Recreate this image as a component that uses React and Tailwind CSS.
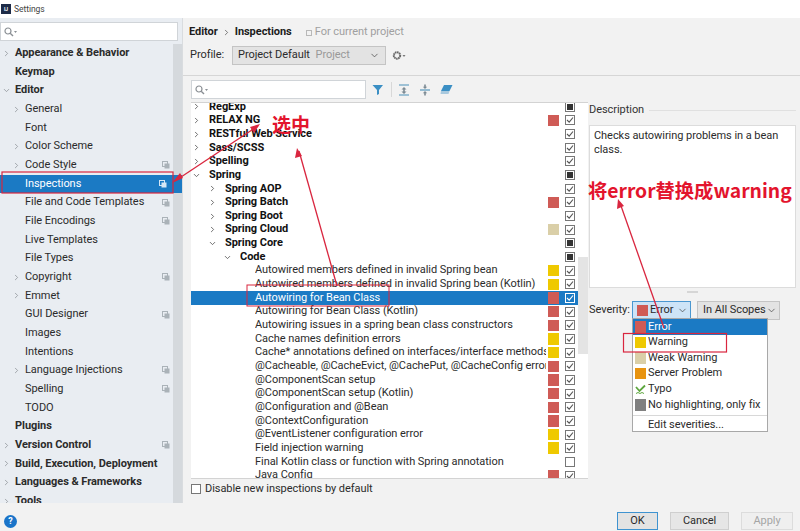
import React from 'react';
import { ChevronRight, ChevronDown } from 'lucide-react';

const FONT = '[font-family:Roboto,"Noto_Sans_CJK_SC",sans-serif]';

const sideItems = [
  ['Appearance & Behavior', 0, 'r', false],
  ['Keymap', 0, '', false],
  ['Editor', 0, 'd', false],
  ['General', 1, 'r', false],
  ['Font', 1, '', false],
  ['Color Scheme', 1, 'r', false],
  ['Code Style', 1, 'r', true],
  ['Inspections', 1, '', true, true],
  ['File and Code Templates', 1, '', true],
  ['File Encodings', 1, '', true],
  ['Live Templates', 1, '', false],
  ['File Types', 1, '', false],
  ['Copyright', 1, 'r', true],
  ['Emmet', 1, 'r', false],
  ['GUI Designer', 1, '', true],
  ['Images', 1, '', false],
  ['Intentions', 1, '', false],
  ['Language Injections', 1, 'r', true],
  ['Spelling', 1, '', true],
  ['TODO', 1, '', false],
  ['Plugins', 0, '', false],
  ['Version Control', 0, 'r', true],
  ['Build, Execution, Deployment', 0, 'r', false],
  ['Languages & Frameworks', 0, 'r', false],
  ['Tools', 0, 'r', false],
];

const E = 'bg-[#cf5b56]';
const W = 'bg-[#efc900]';
const L = 'bg-[#dacfa8]';

// label, level, arrow, swatch, check state, bold, selected
const tree = [
  ['RegExp', 0, 'r', '', 'i', true],
  ['RELAX NG', 0, 'r', E, 'c', true],
  ['RESTful Web Service', 0, 'r', '', 'c', true],
  ['Sass/SCSS', 0, 'r', '', 'c', true],
  ['Spelling', 0, 'r', '', 'c', true],
  ['Spring', 0, 'd', '', 'i', true],
  ['Spring AOP', 1, 'r', '', 'c', true],
  ['Spring Batch', 1, 'r', E, 'c', true],
  ['Spring Boot', 1, 'r', '', 'c', true],
  ['Spring Cloud', 1, 'r', L, 'c', true],
  ['Spring Core', 1, 'd', '', 'i', true],
  ['Code', 2, 'd', '', 'i', true],
  ['Autowired members defined in invalid Spring bean', 3, '', W, 'c'],
  ['Autowired members defined in invalid Spring bean (Kotlin)', 3, '', W, 'c'],
  ['Autowiring for Bean Class', 3, '', E, 'c', false, true],
  ['Autowiring for Bean Class (Kotlin)', 3, '', E, 'c'],
  ['Autowiring issues in a spring bean class constructors', 3, '', E, 'c'],
  ['Cache names definition errors', 3, '', W, 'c'],
  ['Cache* annotations defined on interfaces/interface methods', 3, '', W, 'c'],
  ['@Cacheable, @CacheEvict, @CachePut, @CacheConfig errors', 3, '', E, 'c'],
  ['@ComponentScan setup', 3, '', E, 'c'],
  ['@ComponentScan setup (Kotlin)', 3, '', E, 'c'],
  ['@Configuration and @Bean', 3, '', E, 'c'],
  ['@ContextConfiguration', 3, '', E, 'c'],
  ['@EventListener configuration error', 3, '', W, 'c'],
  ['Field injection warning', 3, '', W, 'c'],
  ['Final Kotlin class or function with Spring annotation', 3, '', '', 'n'],
  ['Java Config', 3, '', E, 'c'],
];

const treeIndent = ['w-[18px]', 'w-[34px]', 'w-[49px]', 'w-[64px]'];

function CopyIcon({ light }) {
  const c = light ? '#d5e6f5' : '#aab2b8';
  return (
    <svg width="8" height="8" viewBox="0 0 8 8" className="shrink-0">
      <rect x="0.5" y="0.5" width="5" height="5" fill="none" stroke={c} />
      <rect x="2.5" y="2.5" width="5" height="5" fill={c} />
    </svg>
  );
}

function Check({ state, selected }) {
  const border = selected ? 'border-white' : 'border-[#777]';
  return (
    <span className={`w-[10px] h-[10px] border ${border} flex items-center justify-center shrink-0`}>
      {state === 'c' && (
        <svg width="8" height="8" viewBox="0 0 8 8">
          <path d="M1 4 L3.2 6.2 L7 1.5" fill="none" stroke={selected ? '#fff' : '#555'} strokeWidth="1.1" />
        </svg>
      )}
      {state === 'i' && <span className="w-[6px] h-[6px] bg-[#333]" />}
    </span>
  );
}

function SearchBox({ className }) {
  return (
    <div className={`bg-white border border-[#d0d4d8] flex items-center pl-[3px] ${className}`}>
      <svg width="14" height="10" viewBox="0 0 14 10">
        <circle cx="4" cy="4" r="3" fill="none" stroke="#8a8f94" strokeWidth="1.2" />
        <path d="M6.2 6.2 L9 9" stroke="#8a8f94" strokeWidth="1.4" />
        <path d="M10 4 L13 4 L11.5 6 Z" fill="#8a8f94" />
      </svg>
    </div>
  );
}

function Sidebar() {
  return (
    <div className="w-[183px] bg-[#e9edf2] flex flex-col shrink-0 border-r border-[#d9dcdf]">
      <div className="h-[26px] pt-[4px] shrink-0">
        <SearchBox className="w-[178px] h-[19px]" />
      </div>
      <div className="flex flex-1 min-h-0 overflow-hidden">
        <div className="flex-1 min-w-0">
          {sideItems.map(([label, lvl, arrow, copy, sel]) => (
            <div
              key={label}
              className={`h-[18.67px] flex items-center pr-[3px] text-[11px] whitespace-nowrap ${
                sel ? 'bg-[#1b7ac4] text-white w-[182px] relative z-0' : 'text-[#2b2b2b]'
              } ${lvl === 0 ? 'font-bold text-[#1c1c1c]' : ''}`}
            >
              <span className={`${lvl === 0 ? 'w-[15px]' : 'w-[25px]'} shrink-0 flex justify-end pr-[1px]`}>
                {arrow === 'r' && <ChevronRight size={9} strokeWidth={2} color="#8a8f94" className="mr-[3px]" />}
                {arrow === 'd' && <ChevronDown size={9} strokeWidth={2} color="#8a8f94" className="mr-[3px]" />}
              </span>
              <span className="flex-1">{label}</span>
              {copy && <span className={sel ? 'mr-[12px]' : ''}><CopyIcon light={sel} /></span>}
            </div>
          ))}
        </div>
        <div className="w-[9px] bg-[#d5d9dd] shrink-0" />
      </div>
    </div>
  );
}

function Toolbar() {
  return (
    <div className="flex items-center h-[19px] shrink-0">
      <SearchBox className="w-[175px] h-[19px]" />
      <svg width="12" height="12" viewBox="0 0 12 12" className="ml-[6px]">
        <path d="M0.5 1 H11 L7 6 V10 L5 11 V6 Z" fill="#3b8fc4" />
      </svg>
      <span className="w-px h-[15px] bg-[#d8d8d8] ml-[7px]" />
      <svg width="12" height="12" viewBox="0 0 12 12" className="ml-[6px]">
        <path d="M1 1 H11 M1 11 H11" stroke="#4a90b8" strokeWidth="1.1" />
        <path d="M6 3 L3.5 5.5 H5.2 V7.5 H3.5 L6 10 L8.5 7.5 H6.8 V5.5 H8.5 Z" fill="#7c8a93" />
      </svg>
      <svg width="12" height="12" viewBox="0 0 12 12" className="ml-[9px]">
        <path d="M1 6 H11" stroke="#4a90b8" strokeWidth="1.1" />
        <path d="M6 5 L3.8 2.8 H5.2 V0.5 H6.8 V2.8 H8.2 Z M6 7 L3.8 9.2 H5.2 V11.5 H6.8 V9.2 H8.2 Z" fill="#7c8a93" />
      </svg>
      <svg width="13" height="11" viewBox="0 0 13 11" className="ml-[9px]">
        <path d="M4 1 H12.5 L9.5 7 H1 Z" fill="#3b8fc4" />
        <path d="M1 7 H9.5 L8.5 10 H0.5 Z" fill="#a9c9de" />
      </svg>
    </div>
  );
}

function Tree() {
  return (
    <div className="h-[377px] mt-[3px] bg-white border-y border-[#d3d3d3] overflow-hidden flex">
      <div className="flex-1 min-w-0 -mt-[3px]">
        {tree.map(([label, lvl, arrow, swatch, state, bold, sel]) => (
          <div
            key={label}
            className={`h-[13.67px] flex items-center whitespace-nowrap text-[11px] ${sel ? 'bg-[#1b7ac4] text-white' : 'text-[#2b2b2b]'} ${bold ? 'font-bold text-[#111]' : ''}`}
          >
            <span className={`${treeIndent[lvl]} shrink-0 flex justify-end`}>
              {arrow === 'r' && <ChevronRight size={9} strokeWidth={2.2} color="#555" className="mr-[8px]" />}
              {arrow === 'd' && <ChevronDown size={9} strokeWidth={2.2} color="#555" className="mr-[8px]" />}
            </span>
            <span className="flex-1 min-w-0 overflow-hidden">{label}</span>
            <span className={`w-[11.5px] h-[11.5px] ml-[2px] shrink-0 ${swatch}`} />
            <span className="w-[6px] shrink-0" />
            <Check state={state} selected={sel} />
            <span className="w-[3px] shrink-0" />
          </div>
        ))}
      </div>
      <div className="w-[10px] shrink-0 flex flex-col bg-white">
        <span className="h-[154px]" />
        <span className="h-[97px] bg-[#e4e4e4]" />
      </div>
    </div>
  );
}

function Combo({ children, className }) {
  return (
    <div className={`h-[19px] border border-[#c4c4c4] bg-[#e3e3e3] flex items-center justify-between pl-[5px] pr-[2px] text-[11px] text-[#2b2b2b] whitespace-nowrap ${className}`}>
      {children}
      <ChevronDown size={11} strokeWidth={1.6} color="#444" className="shrink-0" />
    </div>
  );
}

function Right() {
  return (
    <div className="w-[207px] ml-[1px] mt-[20px] shrink-0 flex flex-col">
      <div className="flex items-center h-[20px] text-[11px] text-[#333] gap-[5px] shrink-0">
        Description
        <span className="flex-1 h-px bg-[#e0e0e0]" />
      </div>
      <div className="mt-[5px] h-[163px] bg-white border border-[#dcdcdc] px-[4px] py-[3px] text-[11px] leading-[13.5px] text-[#2b2b2b]">
        Checks autowiring problems in a bean class.
      </div>
      <div className="flex justify-center h-[6px] items-center shrink-0 mt-[1px]">
        <span className="w-[11px] h-[2px] bg-[#d6d6d6]" />
      </div>
      <div className="flex items-center mt-[6px] text-[11px] text-[#2b2b2b]">
        <span className="w-[43px]">Severity:</span>
        <Combo className="w-[59px] !bg-[#cde4f7] !border-[#4a97d0] !pl-[4px]">
          <span className="flex items-center gap-[2px]">
            <span className={`w-[11px] h-[11px] ${E}`} />
            Error
          </span>
        </Combo>
        <Combo className="w-[83px] ml-[6px] !pr-[3px]">In All Scopes</Combo>
      </div>
    </div>
  );
}

function Popup() {
  const items = [
    ['Error', E, true],
    ['Warning', W],
    ['Weak Warning', L],
    ['Server Problem', 'bg-[#e8930f]'],
    ['Typo', 'typo'],
    ['No highlighting, only fix', 'bg-[#808080]'],
  ];
  return (
    <div className="absolute left-[632px] top-[318px] w-[136px] h-[114px] bg-white border border-[#a8a8a8] text-[11px] text-[#2b2b2b] z-10">
      {items.map(([t, c, sel]) => (
        <div key={t} className={`h-[15.6px] flex items-center gap-[2px] pl-[2px] whitespace-nowrap ${sel ? 'bg-[#1b7ac4] text-white' : ''}`}>
          {c === 'typo' ? (
            <svg width="11" height="11" viewBox="0 0 11 11" className="shrink-0">
              <path d="M1 3 L4.5 7 L10 1.5" fill="none" stroke="#5da63d" strokeWidth="1.8" />
              <path d="M1 9.5 L3 8.5 L5 9.5 L7 8.5 L9 9.5" fill="none" stroke="#5da63d" strokeWidth="1" />
            </svg>
          ) : (
            <span className={`w-[11px] h-[11.5px] shrink-0 ${c}`} />
          )}
          {t}
        </div>
      ))}
      <div className="h-px bg-[#d8d8d8] mt-[2px]" />
      <div className="pl-[15px] mt-[1px] leading-[15px]">Edit severities...</div>
    </div>
  );
}

function Button({ children, className }) {
  return (
    <div className={`h-[18px] mb-[1px] flex items-center justify-center text-[11px] border ${className}`}>{children}</div>
  );
}

export default function App() {
  return (
    <div className={`relative w-[800px] h-[531px] overflow-hidden flex flex-col bg-[#f2f2f2] tracking-[-0.05px] ${FONT}`}>
      <div className="h-[18px] bg-white flex items-center pl-[1px] gap-[3px] text-[8.5px] text-[#444] shrink-0">
        <span className="w-[10px] h-[10px] bg-[#1d2b48] text-[5px] leading-[10px] text-white text-center font-bold">IJ</span>
        Settings
      </div>

      <div className="flex flex-1 min-h-0">
        <Sidebar />
        <div className="flex-1 min-w-0 flex flex-col">
          <div className="flex items-center h-[25px] mt-[1px] pt-[2px] pl-[6px] text-[11px] shrink-0">
            <span className="font-bold text-[#1c1c1c]">Editor</span>
            <ChevronRight size={9} strokeWidth={2} color="#555" className="mx-[4px]" />
            <span className="font-bold text-[#1c1c1c]">Inspections</span>
            <span className="ml-[14px] w-[6px] h-[6px] border border-[#b8b8b8] mr-[3px]" />
            <span className="text-[#a0a0a0]">For current project</span>
          </div>
          <div className="flex items-center h-[19px] mt-[2px] pl-[7px] text-[11px] text-[#2b2b2b] shrink-0">
            <span className="w-[42px]">Profile:</span>
            <Combo className="w-[154px] !pr-[5px]">
              <span>
                Project Default <span className="text-[#999] ml-[3px]">Project</span>
              </span>
            </Combo>
            <svg width="14" height="11" viewBox="0 0 14 11" className="ml-[6px]">
              <circle cx="5" cy="5.5" r="3.2" fill="none" stroke="#666" strokeWidth="2" strokeDasharray="1.6 0.5" />
              <path d="M10.5 5 L13.5 5 L12 7 Z" fill="#777" />
            </svg>
          </div>
          <div className="h-px bg-[#d6d6d6] mt-[10px] shrink-0" />
          <div className="flex pl-[8px] mt-[4px] flex-1 min-h-0 items-start">
            <div className="w-[397px] shrink-0 flex flex-col">
              <Toolbar />
              <Tree />
              <div className="flex items-center h-[20px] gap-[4px] text-[11px] text-[#2b2b2b]">
                <span className="w-[10px] h-[10px] border border-[#777] bg-white" />
                Disable new inspections by default
              </div>
            </div>
            <Right />
          </div>
        </div>
      </div>

      <div className="h-[28px] flex shrink-0 bg-[#f2f2f2]">
        <div className="pl-[4px] pt-[12px] flex-1">
          <span className="w-[13px] h-[13px] rounded-full bg-[#1a74c9] text-white text-[9px] font-bold flex items-center justify-center">?</span>
        </div>
        <div className="flex items-end gap-[12px] pr-[7px]">
          <Button className="w-[41px] border-[#3f93d0] bg-[#e3e3e3] text-[#2b2b2b]">OK</Button>
          <Button className="w-[59px] border-[#cfcfcf] bg-[#e6e6e6] text-[#2b2b2b]">Cancel</Button>
          <Button className="w-[52px] border-[#dcdcdc] bg-[#efefef] text-[#a5a5a5]">Apply</Button>
        </div>
      </div>

      <Popup />

      <svg className="absolute inset-0 z-20 pointer-events-none" width="800" height="531">
        <g fill="none" stroke="#d9263f">
          <rect x="2" y="172" width="171" height="21" strokeWidth="1.2" />
          <rect x="247" y="285" width="142" height="21" strokeWidth="1" />
          <rect x="623.5" y="333.5" width="103" height="18.5" strokeWidth="1.2" />
          <path d="M175 181 L258 126" strokeWidth="1.3" />
          <path d="M337 286 L299 151" strokeWidth="1.3" />
          <path d="M664 328 L620 203" strokeWidth="1.3" />
        </g>
        <g fill="#d9263f">
          <path d="M172 183 L180 173 L183 178 Z" />
          <path d="M260 124 L250 127 L254 133 Z" />
          <path d="M297 148 L295 158 L302 156 Z" />
          <path d="M618 199 L617 209 L624 206 Z" />
        </g>
      </svg>
      <span className="absolute left-[272px] top-[112px] z-20 text-[19px] leading-[24px] font-bold text-[#e3142d] tracking-normal [font-family:'Noto_Sans_CJK_SC',sans-serif]">选中</span>
      <span className="absolute left-[588px] top-[177px] z-20 text-[19.3px] leading-[26px] font-bold text-[#e3142d] tracking-normal whitespace-nowrap [font-family:'Noto_Sans_CJK_SC',sans-serif]">将error替换成warning</span>
    </div>
  );
}
